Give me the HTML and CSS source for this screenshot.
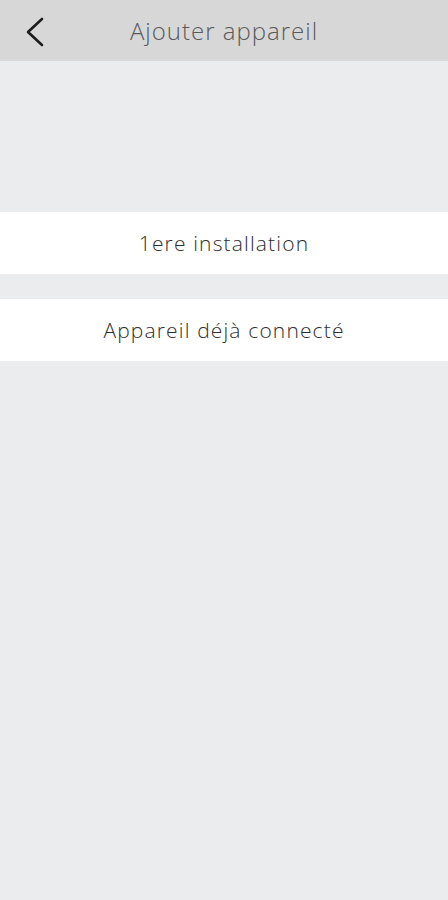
FILE: index.html
```html
<!DOCTYPE html>
<html>
    <head>
        <meta http-equiv="Content-Type" content="text/html; charset=utf-8"/>
        <title>Ajouter appareil</title>
        <link rel="stylesheet" href="styles.css">
    </head>
    <body>
        <header class="topbar">
            <a href="#" class="back">
                <svg width="24" height="32" viewBox="0 0 24 32">
                    <path d="M19 3 L5 16 L19 29" fill="none" stroke="#1c1c1c" stroke-width="2.6" stroke-linecap="round" stroke-linejoin="round"/>
                </svg>
            </a>
            <h1>Ajouter appareil</h1>
        </header>
        <main class="content">
            <a href="#" class="option first">1ere installation</a>
            <a href="#" class="option">Appareil déjà connecté</a>
        </main>
    </body>
</html>
```

FILE: styles.css
```css
body {
    margin: 0;
    background-color: #ebecee;
    font-family: "Open Sans", sans-serif;
    font-weight: 300;
    color: #333;
}
.topbar {
    height: 61px;
    background-color: #d7d7d7;
    display: flex;
    align-items: center;
    justify-content: center;
    position: relative;
}
.back {
    position: absolute;
    left: 23px;
    top: 16px;
    display: block;
    height: 32px;
}
h1 {
    margin: 0;
    font-size: 24px;
    font-weight: 300;
    color: #5a5a5a;
    letter-spacing: 1px;
}
.content {
    display: flex;
    flex-direction: column;
    gap: 25px;
    padding-top: 151px;
}
.option {
    display: flex;
    align-items: center;
    justify-content: center;
    height: 62px;
    background-color: #fff;
    color: #2e2e2e;
    font-size: 21px;
    letter-spacing: 1.15px;
    text-decoration: none;
}
```
